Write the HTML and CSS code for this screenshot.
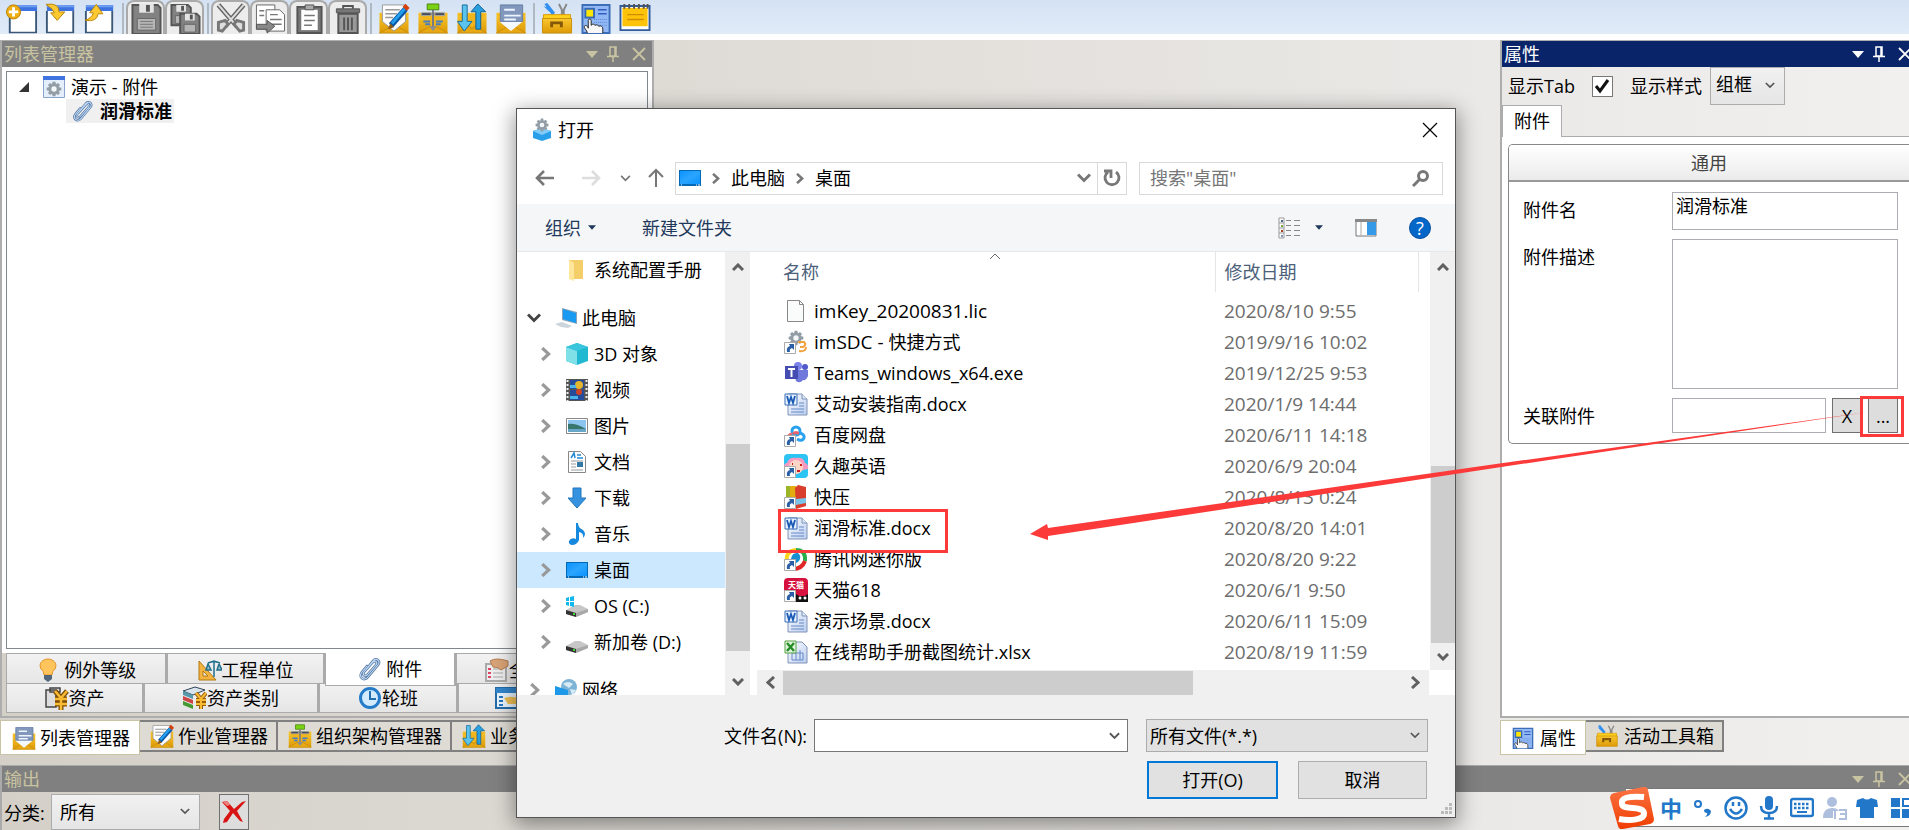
FILE: index.html
```html
<!DOCTYPE html>
<html lang="zh-CN">
<head>
<meta charset="utf-8">
<title>列表管理器</title>
<link rel="stylesheet" href="styles.css">
</head>
<body>
<svg class="defs" aria-hidden="true">
  <defs>
    <linearGradient id="gold" x2="0" y2="1"><stop offset="0" stop-color="#f9c72e"/><stop offset="1" stop-color="#dd9a06"/></linearGradient>
    <linearGradient id="sky" x2="1" y2="1"><stop offset="0" stop-color="#0a93ff"/><stop offset=".5" stop-color="#2ba5ff"/><stop offset="1" stop-color="#0a93ff"/></linearGradient>
    <linearGradient id="paper" x2="1" y2="1"><stop offset="0" stop-color="#fff"/><stop offset="1" stop-color="#b9cdef"/></linearGradient>
    <linearGradient id="flame" x2="0" y2="1"><stop offset="0" stop-color="#fb7444"/><stop offset="1" stop-color="#ef3c00"/></linearGradient>
    <symbol id="i-win" viewBox="0 0 32 32"><path d="M3 4h28v28H3z" fill="#fff"/><path d="M2 2h29v6H2z" fill="#3f74e0"/><path d="M2 2h29v2H2z" fill="#6d9df2"/><path d="M2 8v23h28V8" fill="none" stroke="#3c5878" stroke-width="2"/></symbol>
    <symbol id="i-env" viewBox="0 0 32 32"><path d="M1 10h30v21H1z" fill="url(#gold)"/><path d="M1 11l15 14 15-14" fill="#f3b51c"/><path d="M1 31l12-7 3 3 3-3 12 7z" fill="#e8a814" stroke="#c98d08"/></symbol>
    <symbol id="i-edit" viewBox="0 0 32 32"><use href="#i-env"/><path d="M4 2h24v17L16 29 4 19z" fill="#fdfdfd" stroke="#999"/><path d="M7 7h15M7 11h12M7 15h8" stroke="#999" stroke-width="1.5"/><path d="M13 23L28 6" stroke="#0b55a5" stroke-width="6"/><path d="M14 21L27 6" stroke="#21a0ee" stroke-width="3"/><path d="M27 6l3-3" stroke="#d5400c" stroke-width="6"/><path d="M10 27l2-6 4 4z" fill="#8e5a10"/></symbol>
    <symbol id="i-org" viewBox="0 0 32 32"><use href="#i-env"/><path d="M10 1h12v6H10z" fill="#7bd113" stroke="#4a850a"/><path d="M16 7v20M7 11h18" stroke="#747b82" stroke-width="2"/><path d="M4 10h10v3H4zM18 10h10v3H18z" fill="#444d55" stroke="#aaa"/><path d="M6 19h7M19 19h7M8 22h5M19 22h5" stroke="#477fc0" stroke-width="2"/><path d="M16 29l-4-5h8z" fill="#8b8f93"/></symbol>
    <symbol id="i-flow" viewBox="0 0 32 32"><use href="#i-env"/><path d="M6 2h5v17h5l-8 10-7-10h5z" fill="#5bc4ed" stroke="#176c9f"/><path d="M20 27V9h-5l7-8 8 8h-5v18z" fill="#2aa0df" stroke="#115f94"/></symbol>
    <symbol id="i-list" viewBox="0 0 32 32"><use href="#i-env"/><path d="M5 10h22v10L16 29 5 20z" fill="#f4f8ff"/><path d="M5 2h23v17H5z" fill="#8197bb" stroke="#647da5"/><path d="M9 7h11M9 13h17M9 17h12" stroke="#eef5ff" stroke-width="2"/></symbol>
    <symbol id="i-box" viewBox="0 0 32 32"><path d="M3 1l3-1 8 10-3 3zM2 3l7 3-1 3z" fill="#328ff0"/><path d="M18 1l3 6v7M26 1l-3 6v7" stroke="#888" stroke-width="2" fill="none"/><path d="M2 12h28v5H2z" fill="#ffd11b" stroke="#d89b0b"/><path d="M1 16h30v15H1z" fill="url(#gold)" stroke="#ca8f08"/><path d="M9 25v-6h13v6h-3v-3h-7v3z" fill="#855808"/></symbol>
    <symbol id="i-prop" viewBox="0 0 32 32"><path d="M2 2h28v29H2z" fill="#91b8f4" stroke="#3c6fb8" stroke-width="2"/><path d="M4 5h11v11H4z" fill="#3568b8"/><path d="M6 7h7v7H6z" fill="#ffe600"/><path d="M18 7h9M18 11h9" stroke="#315dc0" stroke-width="1.5"/><path d="M14 17h14M14 20h14M18 23h10" stroke="#5b84d8" stroke-dasharray="1 1"/><path d="M7 31c0-3-4-5-3-7 1-2 4 0 4 2V18c0-2 3-2 3 0v5c2-2 3-1 4 0 2-1 3 0 4 1 2-1 4 0 4 3v4" fill="#f7f7f7" stroke="#222"/></symbol>
    <symbol id="i-clip" viewBox="0 0 24 24"><g fill="none" stroke-linecap="round"><path d="M7 14l8-9c2-2 5 0 3 3L9 18c-2 2-5 0-3-3L15 4c3-4 8 0 5 4L10 20c-4 5-10 0-6-5l5-6" stroke="#54769f" stroke-width="2.6"/><path d="M7 14l8-9c2-2 5 0 3 3L9 18c-2 2-5 0-3-3L15 4c3-4 8 0 5 4L10 20c-4 5-10 0-6-5l5-6" stroke="#bfd9f7" stroke-width="1.1"/></g></symbol>
    <symbol id="i-gear" viewBox="0 0 24 24"><path d="M10 1h4l1 4 3-2 3 3-2 3 4 1v4l-4 1 2 3-3 3-3-2-1 4h-4l-1-4-3 2-3-3 2-3-4-1v-4l4-1-2-3 3-3 3 2z" fill="#929da5"/><circle cx="12" cy="12" r="4" fill="#f4f7fa"/></symbol>
    <symbol id="i-app" viewBox="0 0 22 24"><path d="M2 13l9-3 9 3v7l-9 3-9-3z" fill="#2a9fe9"/><path d="M2 13l9-3 9 3-9 4z" fill="#81ccfb"/><use href="#i-gear" x="4" y="0" width="14" height="14"/></symbol>
    <symbol id="i-desk" viewBox="0 0 22 16"><path d="M0 0h22v16H0z" fill="#0569b5"/><path d="M1 1h20v13H1z" fill="url(#sky)"/><path d="M2 15h1M17 15h1M19 15h2" stroke="#fff"/></symbol>
    <symbol id="c-down" viewBox="0 0 12 8"><path d="M1 1l5 5 5-5" fill="none" stroke="currentColor" stroke-width="2"/></symbol>
    <symbol id="c-up" viewBox="0 0 12 8"><path d="M1 7l5-5 5 5" fill="none" stroke="currentColor" stroke-width="3"/></symbol>
    <symbol id="c-right" viewBox="0 0 9 13"><path d="M1 1l6 5.500-6 5.500" fill="none" stroke="currentColor" stroke-width="3"/></symbol>
    <symbol id="c-left" viewBox="0 0 9 13"><path d="M8 1L2 6.500 8 12" fill="none" stroke="currentColor" stroke-width="3"/></symbol>
    <symbol id="c-tri" viewBox="0 0 12 7"><path d="M0 0h12L6 7z" fill="currentColor"/></symbol>
    <symbol id="c-pin" viewBox="0 0 12 16"><path d="M3 1h6v9H3zM8 1v9M0 10.500h12M6 11v5" fill="none" stroke="currentColor" stroke-width="1.500"/></symbol>
    <symbol id="c-x" viewBox="0 0 14 14"><path d="M1 1l12 12M13 1L1 13" stroke="currentColor" stroke-width="1.800"/></symbol>
    <symbol id="i-word" viewBox="0 0 24 24"><path d="M4 2h14l5 5v16H4z" fill="url(#paper)" stroke="#8094b8"/><path d="M18 2v5h5" fill="#dbe6f8" stroke="#8094b8"/><path d="M15 11h5M15 14h5M7 17h13M7 20h13" stroke="#668ac7"/><path d="M1 2h12v11H1z" fill="#e8f2ff" stroke="#3e6eb5"/><path d="M3 4l2 7 2-6 2 6 2-7" fill="none" stroke="#195bb5" stroke-width="1.800"/></symbol>
    <symbol id="i-excel" viewBox="0 0 24 24"><path d="M4 2h14l5 5v16H4z" fill="url(#paper)" stroke="#8094b8"/><path d="M8 13h11v7H8zM12 13v7M16 10v10" fill="none" stroke="#668ac7"/><path d="M1 1h11v12H1z" fill="#e2f4dc" stroke="#55a144"/><path d="M3 3l7 8M10 3l-7 8" stroke="#258d28" stroke-width="2.400"/></symbol>
    <symbol id="i-short" viewBox="0 0 24 24"><path d="M.5 12.500h11v11H.5z" fill="#fff" stroke="#aaa"/><path d="M3 22q-1-5 3-6l-1-2h5v6l-2-2q-3 1-2 4z" fill="#2b5fa5"/></symbol>
    <symbol id="i-drive" viewBox="0 0 22 14"><path d="M0 7l9-5h5l8 4v3l-12 5-10-3z" fill="#c7c7c7"/><path d="M0 7l10 3v4L0 11z" fill="#333"/><path d="M10 10l12-4v3l-12 5z" fill="#a8a8a8"/><path d="M7 11h2" stroke="#3fdb35" stroke-width="2"/></symbol>
  </defs>
</svg>

<header class="toolbar">
  <button class="tool" aria-label="新建"><svg viewBox="0 0 34 32"><use href="#i-win" x="2" width="32" height="32"/><circle cx="8" cy="9" r="7.500" fill="#eeae13" stroke="#bc8108"/><path d="M8 4v10M3 9h10" stroke="#fff" stroke-width="3"/></svg></button>
  <button class="tool" aria-label="导入"><svg viewBox="0 0 34 32"><use href="#i-win" width="32" height="32"/><path d="M1 1q14-2 14 8h6L13 18 6 10h4Q8 5 1 1z" fill="#fdc931" stroke="#b88309"/></svg></button>
  <button class="tool" aria-label="导出"><svg viewBox="0 0 34 32"><use href="#i-win" width="32" height="32"/><path d="M1 18q13 2 14-7h5L13 1 6 10h4q-2 6-9 8z" fill="#fdc931" stroke="#b88309"/></svg></button>
  <i class="sep"></i>
  <button class="tool boxed" aria-label="保存"><svg viewBox="0 0 32 32"><path d="M2 2h26l3 3v27H2z" fill="#828282" stroke="#555" stroke-width="2"/><path d="M9 1h15v9H9z" fill="#e5e5e5"/><path d="M16 2h4v7h-4z" fill="#555"/><path d="M7 16h19v12H7z" fill="#b5b5b5" stroke="#666"/><path d="M10 19h13M10 22h13M10 25h13" stroke="#777"/></svg></button>
  <button class="tool boxed" aria-label="全部保存"><svg viewBox="0 0 32 32"><g id="fl"><path d="M2 2h17l3 3v18H2z" fill="#828282" stroke="#555" stroke-width="2"/><path d="M7 2h10v7H7z" fill="#e5e5e5"/><path d="M12 3h3v5h-3z" fill="#555"/><path d="M6 13h12v8H6z" fill="#b5b5b5" stroke="#666"/></g><use href="#fl" x="9" y="9"/></svg></button>
  <i class="sep"></i>
  <button class="tool boxed" aria-label="剪切"><svg viewBox="0 0 32 32"><path d="M3 2l19 22M29 2L10 24" stroke="#666" stroke-width="5"/><path d="M3 2l19 22M29 2L10 24" stroke="#ddd" stroke-width="2"/><path d="M3 20l7-2 3 4-6 7-4-1zM29 20l-7-2-3 4 6 7 4-1z" fill="#ddd" stroke="#777" stroke-width="3"/></svg></button>
  <button class="tool boxed" aria-label="复制"><svg viewBox="0 0 32 32"><path d="M2 2h19v25H2z" fill="#fff" stroke="#666"/><path d="M12 7h14l5 5v17H12z" fill="#fff" stroke="#666"/><path d="M5 8h5M5 13h5M16 12h8M16 17h12M16 22h12" stroke="#777" stroke-width="1.500"/><path d="M2 22h11v-4l8 6-8 7v-4H2z" fill="#888" stroke="#555"/></svg></button>
  <button class="tool boxed" aria-label="粘贴"><svg viewBox="0 0 32 32"><path d="M4 4h25v27H4z" fill="#777" stroke="#555" stroke-width="2"/><path d="M8 7h17v21H8z" fill="#fff"/><path d="M12 2h9v5h-9z" fill="#aaa" stroke="#555"/><path d="M11 13h11M11 18h11M11 23h8" stroke="#777" stroke-width="1.500"/></svg></button>
  <button class="tool boxed" aria-label="删除"><svg viewBox="0 0 32 32"><path d="M6 11h20v20H6z" fill="#999" stroke="#555" stroke-width="2"/><path d="M4 6h24v4H4z" fill="#777" stroke="#555"/><path d="M11 6V3h10v3M12 15v13M16 15v13M20 15v13" fill="none" stroke="#555" stroke-width="2"/></svg></button>
  <i class="sep"></i>
  <button class="tool" aria-label="作业管理器"><svg><use href="#i-edit"/></svg></button>
  <button class="tool" aria-label="组织架构管理器"><svg><use href="#i-org"/></svg></button>
  <button class="tool" aria-label="业务管理器"><svg><use href="#i-flow"/></svg></button>
  <button class="tool" aria-label="列表"><svg><use href="#i-list"/></svg></button>
  <i class="sep"></i>
  <button class="tool" aria-label="工具箱"><svg><use href="#i-box"/></svg></button>
  <button class="tool" aria-label="属性"><svg><use href="#i-prop"/></svg></button>
  <button class="tool" aria-label="输出"><svg viewBox="0 0 32 32"><path d="M1 3h30v25H1z" fill="#fff" stroke="#315b9b" stroke-width="2"/><path d="M3 5h26v19H3z" fill="#ffc40a"/><path d="M8 12h17M8 17h17" stroke="#ce8d00" stroke-width="1.500"/><path d="M5 1v5M10 1v5M15 1v5M20 1v5M25 1v5M29 1v5" stroke="#555" stroke-width="2"/></svg></button>
</header>

<main class="work">
  <section class="left">
    <div class="panel">
      <h2 class="cap"><span>列表管理器</span><svg class="tri"><use href="#c-tri"/></svg><svg class="pin"><use href="#c-pin"/></svg><svg class="x"><use href="#c-x"/></svg></h2>
      <div class="tree">
        <div class="node"><svg class="twist" viewBox="0 0 10 10"><path d="M10 0v10H0z" fill="#333"/></svg><svg class="ic" viewBox="0 0 22 22"><path d="M.5.5h21v21H.5z" fill="#e4effb" stroke="#8aa4cc"/><path d="M0 0h22v4H0z" fill="#3f74e0"/><use href="#i-gear" x="3" y="5" width="16" height="16"/></svg><span>演示 - 附件</span></div>
        <div class="node leaf"><svg class="ic"><use href="#i-clip"/></svg><b>润滑标准</b></div>
      </div>
      <div class="tabs one">
        <button><svg class="ic" viewBox="0 0 24 24"><path d="M8 17q0-4-3-6C2 5 7 1 12 1s10 4 7 10q-3 2-3 6z" fill="#ffc45c" stroke="#e0952c"/><path d="M8 17h8v4l-4 3-4-3z" fill="#52667b"/></svg>&nbsp;例外等级</button>
        <button><svg class="ic" viewBox="0 0 24 24"><path d="M1 3l17 19H1zM5 13v5h5z" fill="#f2b340" fill-rule="evenodd" stroke="#b3780f"/><path d="M16 4v15M10 5l6-2 6 2M8 12h5l-3-6zM19 12h5l-3-6z" fill="#9cc5d5" stroke="#226f8b" stroke-width="1.500"/></svg>工程单位</button>
        <button class="on"><svg class="ic"><use href="#i-clip"/></svg>&nbsp;附件</button>
        <button class="part"><svg class="ic" viewBox="0 0 24 24"><path d="M1 6h20v17H1z" fill="#eee" stroke="#aaa" stroke-width="2"/><path d="M3 11h3M3 15h3M3 19h3" stroke="#d46" stroke-width="2"/><path d="M8 11h10M8 15h10M8 19h10" stroke="#aaa"/><path d="M5 3q6-4 18 0v5l-7 4q-2-3-8-3z" fill="#d8a377" stroke="#b37d50"/></svg>全局变量</button>
      </div>
      <div class="tabs two">
        <button><svg class="ic" viewBox="0 0 24 24"><path d="M1 4h10v17H1zM5 2h10v4H5z" fill="#ddd" stroke="#444" stroke-width="1.500"/><path d="M10 5l6 7 6-7M16 12v12M10 13h12M10 18h12" fill="none" stroke="#7b4b08" stroke-width="5"/><path d="M10 5l6 7 6-7M16 12v12M10 13h12M10 18h12" fill="none" stroke="#f8bb32" stroke-width="2.500"/></svg>资产</button>
        <button><svg class="ic" viewBox="0 0 24 24"><path d="M0 5l12-4 10 3-12 5z" fill="#d8e4ee" stroke="#345"/><path d="M0 5l10 4v4L0 9z" fill="#59a"/><path d="M0 10l10 4v4L0 14z" fill="#c44"/><path d="M0 15l10 4v4L0 19z" fill="#493"/><path d="M13 7l5 6 5-6M18 13v10M13 14h10M13 18h10" fill="none" stroke="#9a5d0c" stroke-width="4"/><path d="M13 7l5 6 5-6M18 13v10M13 14h10M13 18h10" fill="none" stroke="#f8bb32" stroke-width="2"/></svg>资产类别</button>
        <button><svg class="ic" viewBox="0 0 24 24"><circle cx="12" cy="12" r="9.500" fill="#d4eaff" stroke="#237bc9" stroke-width="3"/><path d="M12 5v8h6" fill="none" stroke="#236fad" stroke-width="2"/></svg>轮班</button>
        <button class="part far"><svg class="ic" viewBox="0 0 24 24"><path d="M1 2h22v20H1z" fill="#eaf6ff" stroke="#236caa" stroke-width="2"/><path d="M1 2h22v5H1z" fill="#3286cd"/><path d="M4 11h4M4 15h4M4 19h4" stroke="#2676c0" stroke-width="2"/><path d="M9 12q8-3 15 1v5H13z" fill="#f2c257"/></svg>资产</button>
      </div>
    </div>
    <nav class="dock">
      <button class="on"><svg class="ic"><use href="#i-list"/></svg>列表管理器</button>
      <button><svg class="ic"><use href="#i-edit"/></svg>作业管理器</button>
      <button><svg class="ic"><use href="#i-org"/></svg>组织架构管理器</button>
      <button><svg class="ic"><use href="#i-flow"/></svg>业务管理器</button>
    </nav>
  </section>

  <section class="right">
    <div class="panel">
      <h2 class="cap active"><span>属性</span><svg class="tri"><use href="#c-tri"/></svg><svg class="pin"><use href="#c-pin"/></svg><svg class="x"><use href="#c-x"/></svg></h2>
      <div class="opts">
        <label for="showtab">显示Tab</label><span class="check"><input type="checkbox" id="showtab" checked><svg viewBox="0 0 18 18"><path d="M3 9l4 5 8-11" fill="none" stroke="#111" stroke-width="3"/></svg></span>
        <label for="style">显示样式</label><span class="sel"><select id="style"><option>组框</option></select><svg><use href="#c-down"/></svg></span>
      </div>
      <div class="ptab"><button>附件</button></div>
      <div class="page">
        <form class="group">
          <h3>通用</h3>
          <div class="fields">
            <label for="name">附件名</label><input class="tall" id="name" type="text" value="润滑标准">
            <label for="desc">附件描述</label><textarea id="desc"></textarea>
            <label for="link">关联附件</label><div class="linkrow"><input id="link" type="text"><button type="button">X</button><button type="button">...</button></div>
          </div>
        </form>
      </div>
    </div>
    <nav class="dock">
      <button class="on"><svg class="ic"><use href="#i-prop"/></svg>属性</button>
      <button><svg class="ic"><use href="#i-box"/></svg>活动工具箱</button>
    </nav>
  </section>
</main>

<footer class="output">
  <h2 class="cap"><span>输出</span><svg class="tri"><use href="#c-tri"/></svg><svg class="pin"><use href="#c-pin"/></svg><svg class="x"><use href="#c-x"/></svg></h2>
  <div class="filter">
    <label for="cat">分类:</label><span class="sel"><select id="cat"><option>所有</option></select><svg><use href="#c-down"/></svg></span>
    <button aria-label="清除"><svg viewBox="0 0 24 24"><path d="M0 2l5-1 7 8 8-7 4-1-9 10 6 11-3-1-7-8-6 9-4 1 1-4 6-8z" fill="#d91414"/><path d="M1 2l4-1 3 4-3 1z" fill="#ee8080"/></svg></button>
  </div>
</footer>

<div class="dialog" role="dialog" aria-label="打开">
  <div class="title"><svg class="ic"><use href="#i-app"/></svg><span>打开</span><button aria-label="关闭"><svg viewBox="0 0 16 16"><path d="M1 1l14 14M15 1L1 15" stroke="#000" stroke-width="1.200"/></svg></button></div>
  <div class="nav">
    <button aria-label="后退"><svg viewBox="0 0 20 18"><path d="M19 9H2M9 2L2 9l7 7" fill="none" stroke="#777" stroke-width="2.600"/></svg></button>
    <button aria-label="前进"><svg viewBox="0 0 20 18"><path d="M1 9h17M11 2l7 7-7 7" fill="none" stroke="#ddd" stroke-width="2.600"/></svg></button>
    <button class="hist" aria-label="历史"><svg viewBox="0 0 12 8"><use href="#c-down"/></svg></button>
    <button class="up" aria-label="上移"><svg viewBox="0 0 16 20"><path d="M8 19V2M1 9l7-7 7 7" fill="none" stroke="#777" stroke-width="2"/></svg></button>
    <div class="addr"><svg class="mon"><use href="#i-desk"/></svg><svg class="ch"><use href="#c-right"/></svg><a href="#pc">此电脑</a><svg class="ch"><use href="#c-right"/></svg><a href="#desk">桌面</a>
      <button class="drop" aria-label="展开"><svg viewBox="0 0 14 10"><path d="M1 1.500l6 6 6-6" fill="none" stroke="#777" stroke-width="3"/></svg></button><button class="ref" aria-label="刷新"><svg viewBox="0 0 18 18"><path d="M13 3a7 7 0 1 1-8 0M1 2h7v7" fill="none" stroke="#777" stroke-width="2.800"/></svg></button></div>
    <div class="search"><input type="text" aria-label="搜索" placeholder='搜索"桌面"'><svg viewBox="0 0 18 18"><circle cx="11" cy="7" r="4.500" fill="none" stroke="#777" stroke-width="3"/><path d="M8 10l-7 7" stroke="#777" stroke-width="3"/></svg></div>
  </div>
  <div class="cmds">
    <button>组织<svg class="dd"><use href="#c-tri"/></svg></button><button class="new">新建文件夹</button>
    <button class="view" aria-label="视图"><svg class="vi" viewBox="0 0 22 22"><path d="M1 1h5v20H1zM1 6h5M1 11h5M1 16h5" fill="#fff" stroke="#999"/><path d="M3 3h2v2H3z" fill="#468"/><path d="M3 8h2v2H3z" fill="#7a4"/><path d="M3 13h2v2H3z" fill="#a42"/><path d="M3 18h2v2H3z" fill="#79b"/><path d="M8 3.500h5M16 3.500h6M8 8.500h5M16 8.500h6M8 13.500h5M16 13.500h6M8 18.500h5M16 18.500h6" stroke="#888"/></svg><svg class="dd"><use href="#c-tri"/></svg></button>
    <button class="pane" aria-label="预览窗格"><svg viewBox="0 0 22 18"><path d="M1 1h20v16H1z" fill="#fff" stroke="#777"/><path d="M0 0h22v3H0z" fill="#888"/><path d="M6 3v14" stroke="#aaa"/><path d="M12 3h9v13h-9z" fill="#3499e6"/></svg></button>
    <button class="help" aria-label="帮助">?</button>
  </div>
  <div class="body">
    <div class="side">
      <div class="folder"><svg class="ic" viewBox="0 0 22 22"><path d="M3 1h14v19H3z" fill="#f4cf69"/><path d="M3 1l5 3v18l-5-2z" fill="#ffe69a"/></svg>系统配置手册</div>
      <div class="root"><svg class="tw" viewBox="0 0 14 10"><path d="M1 1.500l6 6 6-6" fill="none" stroke="#444" stroke-width="3"/></svg><svg class="ic" viewBox="0 0 22 22"><path d="M7 1l15 4v12L7 13z" fill="#8ba4b8"/><path d="M8 2l13 4v10L8 12z" fill="#199af2"/><path d="M0 17l7-2 10 4-4 2-7-1z" fill="#ccd5dc"/></svg>此电脑</div>
      <div><svg class="tw"><use href="#c-right"/></svg><svg class="ic" viewBox="0 0 22 22"><path d="M0 4l11-4 11 4v14l-11 4L0 18z" fill="#21b8d1"/><path d="M0 4l11 4v14L0 18z" fill="#80e0e8"/><path d="M0 4l11-4 11 4-11 4z" fill="#39c6dc"/></svg>3D 对象</div>
      <div><svg class="tw"><use href="#c-right"/></svg><svg class="ic" viewBox="0 0 22 22"><path d="M0 0h22v22H0z" fill="#555"/><path d="M4 1h14v9H4zM4 11h14v10H4z" fill="#244c9b"/><circle cx="13" cy="6" r="4" fill="#e5b52c"/><circle cx="13" cy="13" r="3" fill="#cf4225"/><path d="M4 6h6v3H4zM4 17h8v3H4z" fill="#4bb4e8"/><path d="M1.500 1v21M20.500 1v21" stroke="#eee" stroke-width="2" stroke-dasharray="2 2"/></svg>视频</div>
      <div><svg class="tw"><use href="#c-right"/></svg><svg class="ic" viewBox="0 0 22 22"><path d="M.5 3.500h21v15H.5z" fill="#fff" stroke="#888"/><path d="M2 5h18v12H2z" fill="#8cc6f0"/><path d="M2 9q8-1 18 5v1H2z" fill="#38776d"/><path d="M2 14h18v3H2z" fill="#68a7c8"/></svg>图片</div>
      <div><svg class="tw"><use href="#c-right"/></svg><svg class="ic" viewBox="0 0 22 22"><path d="M2.500.5h12l5 5v16h-17z" fill="#fff" stroke="#888"/><path d="M5 7l3-5 1 5M11 4h4M11 7h6" fill="none" stroke="#228ad1" stroke-width="1.500"/><path d="M5 10h12M5 13h5M5 16h5M5 19h12" stroke="#999"/><path d="M11 11h6v5h-6z" fill="#3479a5"/></svg>文档</div>
      <div><svg class="tw"><use href="#c-right"/></svg><svg class="ic" viewBox="0 0 22 22"><path d="M7 1h8v10h5l-9 10-9-10h5z" fill="#3492df" stroke="#2276bc"/></svg>下载</div>
      <div><svg class="tw"><use href="#c-right"/></svg><svg class="ic" viewBox="0 0 22 22"><path d="M10 0h2q0 5 5 7 4 4 0 8 1-5-4-6v8q-2 5-7 5-4-1-3-4 2-4 7-2z" fill="#1688dd"/></svg>音乐</div>
      <div class="cur"><svg class="tw"><use href="#c-right"/></svg><svg class="mon"><use href="#i-desk"/></svg>桌面</div>
      <div><svg class="tw"><use href="#c-right"/></svg><svg class="ic" viewBox="0 0 22 22"><use href="#i-drive" y="8" width="22" height="14"/><path d="M0 3l3-1v4H0zM4 2l4-1v5H4zM0 7h3v4l-3-1zM4 7h4v5l-4-1z" fill="#12b8ed"/></svg>OS (C:)</div>
      <div><svg class="tw"><use href="#c-right"/></svg><svg class="ic" viewBox="0 0 22 22"><use href="#i-drive" y="8" width="22" height="14"/></svg>新加卷 (D:)</div>
      <div class="root net"><svg class="tw"><use href="#c-right"/></svg><svg class="ic" viewBox="0 0 22 22"><circle cx="14" cy="8" r="8" fill="#7eb3d6"/><path d="M8 5q5-4 10 0l-4 4zM15 10l6 1-4 5z" fill="#d6ebf5"/><path d="M0 7l13 4v11L0 18z" fill="#1e98e8"/></svg>网络</div>
    </div>
    <div class="vbar v1"><svg><use href="#c-up"/></svg><i></i><svg class="dn"><use href="#c-up"/></svg></div>
    <div class="files">
      <div class="scroller">
        <table>
          <thead><tr><th>名称<svg class="sort" viewBox="0 0 12 7"><path d="M1 6l5-5 5 5" fill="none" stroke="#666"/></svg></th><th>修改日期</th><th></th></tr></thead>
          <tbody>
            <tr><td><svg class="fi" viewBox="0 0 24 24"><path d="M3.500 1.500h12l4 4v17h-16z" fill="#fafbfb" stroke="#888"/><path d="M15.500 1.500v4h4" fill="none" stroke="#888"/></svg><em>imKey_20200831.lic</em></td><td>2020/8/10 9:55</td><td></td></tr>
            <tr><td><svg class="fi" viewBox="0 0 24 24"><use href="#i-gear" x="4" y="0" width="16" height="16"/><path d="M14 12h6q3 3-1 5h-3M22 17q0 5-7 4" fill="none" stroke="#f3a23b" stroke-width="2"/><use href="#i-short"/></svg><em>imSDC - </em>快捷方式</td><td>2019/9/16 10:02</td><td></td></tr>
            <tr><td><svg class="fi" viewBox="0 0 24 24"><circle cx="14" cy="5" r="4" fill="#7b83eb"/><circle cx="21" cy="6" r="3" fill="#5059c9"/><path d="M9 9h15v6q-2 5-5 4-3 4-7 1z" fill="#7078dc"/><path d="M1 5h13v13H1z" fill="#454db2"/><path d="M4 8h7M7.500 8v8" stroke="#fff" stroke-width="2"/></svg>Teams_windows_x64.exe</td><td>2019/12/25 9:53</td><td></td></tr>
            <tr><td><svg class="fi"><use href="#i-word"/></svg>艾动安装指南.docx</td><td>2020/1/9 14:44</td><td></td></tr>
            <tr><td><svg class="fi" viewBox="0 0 24 24"><circle cx="12" cy="8" r="4" fill="none" stroke="#28a1ee" stroke-width="3"/><path d="M8 11q-4 1-5 5M9 11q3-3 6 0" fill="none" stroke="#e9646a" stroke-width="3"/><path d="M15 10q6 1 5 5-2 4-7 1" fill="none" stroke="#28a1ee" stroke-width="3"/><use href="#i-short"/></svg>百度网盘</td><td>2020/6/11 14:18</td><td></td></tr>
            <tr><td><svg class="fi" viewBox="0 0 24 24"><rect width="24" height="24" rx="4" fill="#2bc4f3"/><path d="M0 13q0-4 3-4Q5 3 12 4q8-1 9 5 4 1 3 6l-5 1-8 5-7-5z" fill="#f69ac1"/><circle cx="12" cy="13" r="7" fill="#ffd5c5"/><path d="M8 10h1M16 11h2M13 17h3" stroke="#c22" stroke-width="2"/><use href="#i-short"/></svg>久趣英语</td><td>2020/6/9 20:04</td><td></td></tr>
            <tr><td><svg class="fi" viewBox="0 0 24 24"><path d="M2 1h9v21H2z" fill="#9ab526"/><path d="M6 1h6v21H6z" fill="#e3ad12"/><path d="M11 3l3-3 8 2v19l-10 3z" fill="#d83e2b"/><path d="M12 14l10-1v5l-10 2z" fill="#79c4e8"/><use href="#i-short"/></svg>快压</td><td>2020/8/13 0:24</td><td></td></tr>
            <tr><td><svg class="fi"><use href="#i-word"/></svg>润滑标准.docx</td><td>2020/8/20 14:01</td><td></td></tr>
            <tr><td><svg class="fi" viewBox="0 0 24 24"><g fill="none" stroke-width="4"><path d="M3 15Q1 4 12 3" stroke="#fad51a"/><path d="M12 3q10 0 9 11" stroke="#2aae4b"/><path d="M21 14q-3 8-12 8" stroke="#df2827"/></g><path d="M7 12q1-7 7-6 4 3 1 8l-4 3z" fill="#168fd0"/><use href="#i-short"/></svg>腾讯网迷你版</td><td>2020/8/20 9:22</td><td></td></tr>
            <tr><td><svg class="fi" viewBox="0 0 24 24"><rect width="24" height="24" rx="4" fill="#d6113d"/><path d="M12 16l3 2h6l3-2v8H12z" fill="#111"/><circle cx="16" cy="20" r="1.500" fill="#fff"/><circle cx="21" cy="20" r="1.500" fill="#fff"/><text x="4" y="10" class="tiny">天猫</text><use href="#i-short"/></svg>天猫618</td><td>2020/6/1 9:50</td><td></td></tr>
            <tr><td><svg class="fi"><use href="#i-word"/></svg>演示场景.docx</td><td>2020/6/11 15:09</td><td></td></tr>
            <tr><td><svg class="fi"><use href="#i-excel"/></svg>在线帮助手册截图统计.xlsx</td><td>2020/8/19 11:59</td><td></td></tr>
          </tbody>
        </table>
        <div class="vbar v2"><svg><use href="#c-up"/></svg><i></i><svg class="dn"><use href="#c-up"/></svg></div>
      </div>
      <div class="hbar"><svg><use href="#c-left"/></svg><i></i><svg><use href="#c-right"/></svg></div>
    </div>
  </div>
  <form class="foot">
    <label for="fn">文件名(N):</label>
    <div class="combo"><input id="fn" type="text"><svg><use href="#c-down"/></svg></div>
    <span class="sel"><select aria-label="文件类型"><option>所有文件(*.*)</option></select><svg><use href="#c-down"/></svg></span>
    <div class="acts"><button type="button" class="ok">打开(O)</button><button type="button">取消</button></div>
  </form>
  <svg class="grip" viewBox="0 0 12 12"><path d="M8 0h3v3H8zM8 4h3v3H8zM8 8h3v3H8zM4 4h3v3H4zM4 8h3v3H4zM0 8h3v3H0z" fill="#bbb"/></svg>
</div>

<div class="ime">
  <svg class="logo" viewBox="0 0 44 42"><path d="M4 6L33 0q4-1 5 3l6 29q0 4-4 5L13 42q-4 1-5-3L0 11q0-4 4-5z" fill="url(#flame)"/><path d="M34 10Q10 8 12 17c1 7 21 1 22 9 1 7-14 8-25 6" fill="none" stroke="#fff" stroke-width="6"/></svg>
  <b>中</b>
  <svg viewBox="0 0 20 24"><circle cx="5" cy="8" r="3" fill="none" stroke="#2277c9" stroke-width="2"/><path d="M11 14q4-3 7 1 0 5-6 6 3-3 2-4-3 0-3-3z" fill="#2277c9"/></svg>
  <svg viewBox="0 0 24 24"><circle cx="12" cy="12" r="10.500" fill="none" stroke="#2277c9" stroke-width="2.500"/><path d="M6 13q6 9 12 0M9 6v4M15 6v4" fill="none" stroke="#2277c9" stroke-width="2.500"/></svg>
  <svg viewBox="0 0 20 24"><rect x="6" y="0" width="8" height="14" rx="4" fill="#2277c9"/><path d="M2 10q0 7 8 7t8-7M10 17v5M5 22.500h10" fill="none" stroke="#2277c9" stroke-width="2.500"/></svg>
  <svg viewBox="0 0 24 20"><rect x="1" y="1" width="22" height="17" rx="2" fill="none" stroke="#2277c9" stroke-width="2.500"/><path d="M4 6h16M4 10h16" stroke="#2277c9" stroke-width="2.500" stroke-dasharray="2.500 1.500"/><path d="M7 14h10" stroke="#2277c9" stroke-width="2"/></svg>
  <svg class="who" viewBox="0 0 26 24"><circle cx="9" cy="6" r="5" fill="#adbfdd"/><path d="M0 22q0-10 9-10 5 0 7 3h-6v7z" fill="#adbfdd"/><path d="M12 13v10M16 14h7v9h-7M17 18h5" fill="none" stroke="#adbfdd" stroke-width="2"/></svg>
  <svg viewBox="0 0 24 24"><path d="M2 4l6-2q4 3 8 0l6 2 1 7h-4v11H5V11H1z" fill="#2277c9"/></svg>
  <svg viewBox="0 0 24 24"><path d="M3 2h9v9H3zM3 13h9v9H3zM14 13h9v9h-9z" fill="#2277c9"/><path d="M15 3h7v7h-7z" fill="none" stroke="#2277c9" stroke-width="2"/></svg>
</div>

<svg class="marks" width="1909" height="830" viewBox="0 0 1909 830" aria-hidden="true">
  <path d="M1030 534L1047 524 1048 528 1475 467 1868 412 1475 471 1048 536 1048 540z" fill="#fc3a3a"/>
  <path d="M779.500 510.500h167v41h-167zM1861.500 397.500h41v38h-41z" fill="none" stroke="#fc3a3a" stroke-width="3"/>
</svg>
</body>
</html>
```
FILE: styles.css
```css
* { box-sizing: border-box; }
html, body { height: 100%; }
body {
  margin: 0;
  display: flex;
  flex-direction: column;
  position: relative;
  overflow: hidden;
  background: linear-gradient(90deg, #d4d0c8, #f1f0ef);
  color: #000;
  font: 18px/24px "Open Sans", "Noto Sans CJK SC", sans-serif;
}
button, input, select, textarea { font: inherit; color: inherit; margin: 0; }
button { padding: 0; border: 0; background: none; }
select { appearance: none; border-radius: 0; }
h2, h3 { margin: 0; font: inherit; }
a { color: inherit; text-decoration: none; }
em { font-style: normal; font-size: 19px; white-space: pre; }
svg { flex: none; display: block; }
.defs { position: absolute; width: 0; height: 0; }
.ic { width: 24px; height: 24px; }

/* toolbar */
.toolbar {
  flex: none;
  display: flex;
  align-items: flex-end;
  height: 40px;
  padding-left: 2px;
  border-bottom: 6px solid #fff;
  background: linear-gradient(#d4e2f3, #e1ebf8);
}
.tool { display: flex; justify-content: center; width: 39px; height: 34px; padding-top: 3px; }
.tool svg { width: 32px; height: 31px; }
.boxed { border: 2px solid #aaa; border-bottom: 0; border-radius: 8px 8px 0 0; background: #ececec; padding-top: 1px; }
.sep { width: 2px; height: 31px; margin: 0 2px 0 3px; background: #b0b8c2; }

/* docked panels */
.work { flex: 1; display: flex; justify-content: space-between; min-height: 0; }
.left, .right { display: flex; flex-direction: column; }
.left { width: 654px; }
.right { width: 409px; }
.panel { flex: 1; display: flex; flex-direction: column; border: 2px solid #adadad; border-top-width: 1px; min-height: 0; }
.right .panel { border-right: 0; }
.cap { flex: none; display: flex; align-items: center; height: 26px; padding: 0 6px 0 2px; background: #808080; color: #c8c3a0; }
.cap span { flex: 1; }
.cap.active { background: #0a246a; color: #fff; }
.right .cap, .output .cap { padding-right: 0; }
.tri { width: 12px; height: 7px; }
.pin { width: 12px; height: 16px; margin: 0 13px 0 9px; }
.x { width: 14px; height: 14px; }
.right .x, .output .x { margin-right: -3px; }
.tree { flex: 1; margin: 0; padding: 4px 3px; border: 4px solid #fff; outline: 1px solid #828790; outline-offset: -5px; background: #fff; }
.node { display: flex; align-items: center; height: 24px; gap: 6px; padding: 0 0 0 10px; }
.twist { width: 10px; height: 10px; margin-right: 8px; }
.node .ic { width: 22px; height: 22px; }
.leaf { width: 108px; margin-left: 57px; padding-left: 6px; background: #f0f0f0; white-space: nowrap; }

.tabs { flex: none; display: grid; height: 30px; margin-left: 4px; }
.one { grid-template-columns: 161px 158px 131px 1fr; }
.two { grid-template-columns: 138px 175px 139px 1fr; margin-bottom: 3px; }
.tabs button { display: flex; align-items: center; justify-content: center; border: 1px solid #aaa; border-width: 1px 2px 1px 1px; background: linear-gradient(#f2f2f2, #e5e5e5); white-space: nowrap; }
.tabs .part { justify-content: flex-start; padding-left: 28px; }
.tabs .far { padding-left: 36px; }
.tabs .on { position: relative; z-index: 1; height: 33px; border-top: 0; background: #fff; }
.dock { flex: none; display: flex; align-items: flex-start; height: 47px; padding-top: 2px; }
.dock button { display: flex; align-items: center; gap: 4px; height: 32px; padding: 0 8px 0 10px; border: 2px solid #808080; border-left-width: 0; background: #dedbd4; white-space: nowrap; }
.dock .on { height: 35px; padding: 0 9px 0 11px; border: 1px solid #c8c4a5; background: #fff; }
.right .dock .ic { width: 22px; height: 22px; margin-right: 2px; }

/* properties */
.opts { display: flex; align-items: center; height: 38px; padding-left: 6px; }
.check { position: relative; display: flex; margin: 0 17px; }
.check input { appearance: none; width: 21px; height: 21px; border: 1px solid #777; background: #fff; }
.check svg { position: absolute; inset: 1px; pointer-events: none; width: 18px; }
.sel { position: relative; display: flex; }
.sel select { width: 100%; border: 1px solid #acacac; background: linear-gradient(#f1f1f1, #e5e5e5); }
.sel svg { position: absolute; right: 10px; top: 50%; width: 10px; height: 7px; margin-top: -4px; color: #555; pointer-events: none; }
.opts .sel { width: 75px; height: 38px; margin-left: 8px; }
.opts select { padding: 0 5px 5px; }
.ptab { display: flex; height: 32px; border-bottom: 1px solid #acacac; }
.ptab button { width: 60px; height: 32px; padding-bottom: 2px; border: 1px solid #acacac; border-bottom: 0; background: #fff; }
.page { flex: 1; padding: 7px 0 0 6px; background: #fff; }
.group { border: 1px solid #888; border-right: 0; border-radius: 5px 0 0 5px; overflow: hidden; }
.group h3 { height: 37px; padding-top: 6px; text-align: center; color: #444; border-bottom: 2px solid #999; background: linear-gradient(#fff, #ebebeb); }
.fields { display: grid; grid-template-columns: 149px 1fr; row-gap: 9px; padding: 10px 11px 10px 14px; }
.fields label { padding-top: 6px; }
.fields input, .fields textarea { display: block; width: 100%; border: 1px solid #abadb3; padding: 0 3px; background: #fff; resize: none; }
.fields .tall { height: 38px; padding-bottom: 13px; }
.fields textarea { height: 150px; }
.linkrow { display: flex; height: 35px; }
.linkrow input { flex: 1; min-width: 0; }
.linkrow button { width: 30px; margin-left: 6px; border: 1px solid #707070; background: #ddd; }

/* output */
.output { flex: none; height: 65px; border: solid #aaa; border-width: 1px 0 0 2px; }
.filter { display: flex; height: 38px; padding-top: 2px; }
.filter label { width: 49px; padding: 7px 0 0 2px; }
.filter .sel { width: 149px; }
.filter .sel select { padding: 0 8px; }
.filter button { width: 30px; margin-left: 19px; border: 1px solid #707070; background: #ddd; }
.filter button svg { width: 24px; height: 24px; margin: 0 auto; }

/* file dialog */
.dialog { position: absolute; left: 516px; top: 108px; width: 940px; border: 1px solid #555; background: #f0f0f0; box-shadow: 0 5px 20px 2px rgba(0, 0, 0, .4); }
.title { display: flex; align-items: center; gap: 5px; height: 43px; padding: 0 17px 2px 14px; background: #fff; }
.title .ic { width: 22px; }
.title span { flex: 1; }
.title button svg { width: 16px; height: 16px; }
.nav { display: flex; align-items: center; height: 52px; padding: 0 12px 0 18px; background: #fff; }
.nav button svg { width: 20px; height: 18px; }
.nav > button + button { margin-left: 26px; }
.nav > .hist { margin-left: 19px; color: #777; }
.nav .hist svg { width: 11px; height: 7px; }
.nav > .up { margin-left: 17px; }
.nav .up svg { width: 16px; height: 20px; }
.addr { flex: 1; display: flex; align-items: center; height: 33px; margin: 0 12px 0 11px; padding-left: 3px; border: 1px solid #d9d9d9; }
.mon { width: 22px; height: 16px; }
.ch { width: 8px; height: 11px; margin: 0 11px; color: #777; }
.addr .drop { margin-left: auto; padding-right: 6px; }
.addr .drop svg { width: 14px; height: 10px; }
.addr .ref { display: flex; align-items: center; justify-content: center; width: 29px; height: 31px; border-left: 1px solid #d9d9d9; }
.search { display: flex; align-items: center; width: 304px; height: 33px; padding: 0 12px 0 10px; border: 1px solid #d9d9d9; }
.search input { flex: 1; min-width: 0; border: 0; padding: 0; outline: 0; }
.search input::placeholder { color: #767676; opacity: 1; }
.search svg { width: 18px; height: 18px; }
.cmds { display: flex; align-items: center; height: 48px; padding: 0 24px 0 28px; border-bottom: 1px solid #e8e8e8; background: #f5f6f7; color: #1e395b; }
.cmds button { display: flex; align-items: center; }
.dd { width: 8px; height: 5px; margin-left: 7px; }
.cmds .new { margin-left: 46px; }
.cmds .view { margin-left: auto; }
.vi { width: 22px; height: 22px; }
.view .dd { margin-left: 15px; }
.pane { margin: 0 32px; }
.pane svg { width: 22px; height: 18px; }
.cmds .help { justify-content: center; width: 22px; height: 22px; border: 1px solid #0a4fa0; border-radius: 50%; background: #0568c8; color: #fff; }
.body { display: flex; height: 443px; background: #fff; }
.side { width: 208px; overflow: hidden; }
.side div { display: flex; align-items: center; height: 36px; padding-left: 24px; white-space: nowrap; }
.side .ic, .side .mon { margin-right: 6px; }
.side .ic { width: 22px; height: 22px; }
.tw { width: 10px; height: 14px; margin-right: 15px; color: #999; }
.side .folder { padding-left: 49px; margin-bottom: 12px; }
.side .root { padding-left: 10px; }
.side .root .ic { margin: 0 5px 0 0; }
.side .root:not(.net) .tw { width: 14px; height: 10px; margin-right: 14px; }
.side .root.net { margin-top: 12px; padding-left: 13px; }
.side .cur { background: #cce8ff; }
.vbar { display: flex; flex-direction: column; align-items: center; flex: none; width: 25px; padding: 11px 0 9px; background: #f0f0f0; color: #606060; }
.vbar svg { width: 12px; height: 8px; }
.vbar i { width: 24px; background: #cdcdcd; }
.dn { transform: rotate(180deg); }
.vbar .dn { margin-top: auto; }
.v1 { margin-right: 6px; }
.v1 i { height: 207px; margin-top: 173px; }
.v2 i { height: 177px; margin-top: 195px; }
.files { flex: 1; display: flex; flex-direction: column; min-width: 0; }
.scroller { flex: 1; display: flex; min-height: 0; }
table { flex: 1; border-collapse: collapse; table-layout: fixed; height: 416px; width: 100%; }
th { position: relative; width: 203px; height: 40px; padding: 0 0 0 9px; text-align: left; font-weight: 400; color: #4c607a; border-right: 1px solid #e5e5e5; }
th:first-child { width: 459px; padding-left: 27px; }
th:last-child { width: 12px; border: 0; padding: 0; }
.sort { position: absolute; left: 233px; top: 1px; width: 12px; height: 7px; }
td { height: 31px; padding: 0; white-space: nowrap; }
tbody tr:first-child td { height: 34px; padding-top: 3px; }
td:first-child { display: flex; align-items: center; padding-left: 28px; }
td:nth-child(2) { padding-left: 9px; font-size: 19px; color: #6d6d6d; }
.fi { width: 24px; height: 24px; margin-right: 6px; }
.tiny { font-size: 8px; font-weight: 700; fill: #fff; }
.hbar { display: flex; align-items: center; height: 25px; margin: 0 26px 0 1px; padding: 0 9px; background: #f0f0f0; color: #606060; }
.hbar svg { width: 9px; height: 13px; }
.hbar i { width: 410px; height: 24px; margin: 0 auto 0 8px; background: #cdcdcd; }
.foot { display: grid; grid-template-columns: 1fr 314px 282px; align-items: center; column-gap: 18px; padding: 24px 27px 18px 0; row-gap: 9px; }
.foot label { text-align: right; margin-right: -18px; padding-right: 7px; }
.combo { position: relative; height: 33px; }
.combo input { width: 100%; height: 33px; border: 1px solid #777; background: #fff; }
.combo svg { position: absolute; right: 8px; top: 13px; width: 11px; height: 8px; color: #555; }
.foot .sel { height: 33px; }
.foot .sel select { padding: 0 3px; background: #e1e1e1; }
.foot .sel svg { right: 8px; }
.acts { grid-column: 3; display: flex; gap: 20px; padding: 0 1px; }
.acts button { flex: 1; height: 38px; border: 1px solid #adadad; background: #e1e1e1; }
.acts .ok { border: 2px solid #0078d7; }
.grip { position: absolute; right: 2px; bottom: 2px; width: 12px; height: 12px; }

/* input method bar */
.ime { position: absolute; right: 0; bottom: 3px; display: flex; align-items: center; gap: 9px; height: 39px; width: 283px; border: solid #777; border-width: 1px 0; background: #fff; color: #2277c9; }
.ime svg { height: 24px; width: 24px; }
.ime b { width: 22px; font-size: 22px; }
.ime .logo { width: 44px; height: 42px; margin: 0 -3px 0 -16px; }
.ime .who { width: 26px; height: 24px; margin-right: -3px; }

.marks { position: absolute; left: 0; top: 0; pointer-events: none; }
```
